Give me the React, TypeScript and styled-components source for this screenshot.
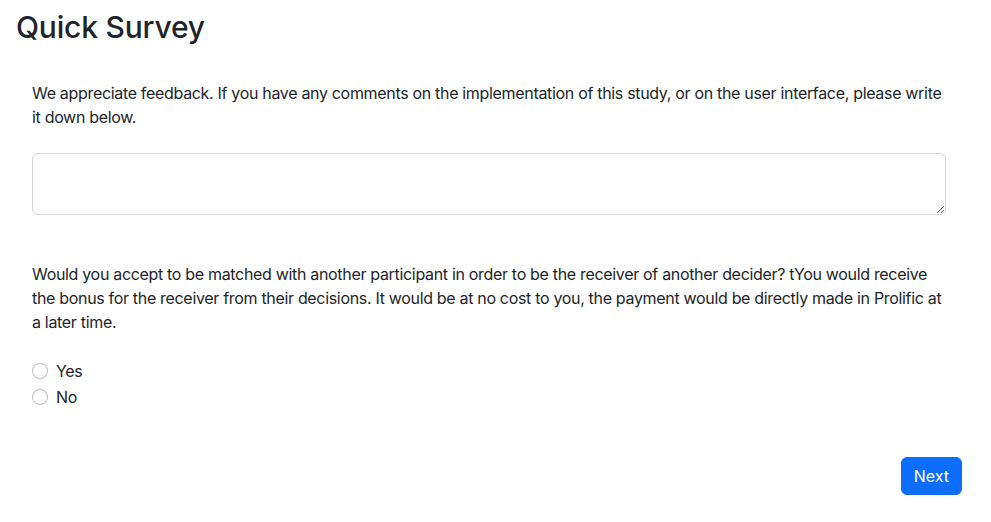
import React from "react";
import styled, { createGlobalStyle } from "styled-components";

const Global = createGlobalStyle`
  html, body { margin: 0; padding: 0; background: #fff; }
  body {
    font-family: Inter, "Liberation Sans", Arial, sans-serif;
    font-size: 16px;
    line-height: 1.5;
    color: #212529;
  }
  * { box-sizing: border-box; }
`;

const Page = styled.div`
  padding: 0 29px 0 16px;
`;

const Title = styled.h2`
  margin: 0;
  padding-top: 9px;
  font-size: 30px;
  font-weight: 500;
  line-height: 1.2;
  letter-spacing: -0.2px;
`;

const Body = styled.div`
  padding: 36px 16px 0 16px;
`;

const Field = styled.div<{ $gap: number }>`
  margin-bottom: ${(p) => p.$gap}px;
`;

const Label = styled.label`
  display: block;
  margin-bottom: 24px;
  letter-spacing: -0.32px;
`;

const TextArea = styled.textarea`
  display: block;
  width: 100%;
  height: 62px;
  padding: 6px 12px;
  font: inherit;
  color: #212529;
  border: 1px solid #d4d7db;
  border-radius: 6px;
  resize: vertical;
  outline: none;
`;

const Radios = styled.div`
  display: flex;
  flex-direction: column;
  padding-top: 1px;
`;

const RadioRow = styled.label`
  display: flex;
  align-items: center;
  gap: 8px;
  min-height: 24px;
  margin-bottom: 2px;
  letter-spacing: -0.32px;
`;

const Radio = styled.input.attrs({ type: "radio" })`
  appearance: none;
  margin: 0;
  width: 16px;
  height: 16px;
  border: 1px solid rgba(0, 0, 0, 0.25);
  border-radius: 50%;
  background: #fff;
`;

const Footer = styled.div`
  display: flex;
  justify-content: flex-end;
  padding-top: 46px;
`;

const Button = styled.button`
  height: 38px;
  padding: 0 12px;
  font: inherit;
  font-size: 16px;
  color: #fff;
  background: #0d6efd;
  border: 1px solid #0d6efd;
  border-radius: 6px;
`;

export default function App() {
  return (
    <>
      <Global />
      <Page>
        <Title>Quick Survey</Title>
        <Body>
          <Field $gap={47}>
            <Label>
              We appreciate feedback. If you have any comments on the implementation of this study, or on the user
              interface, please write it down below.
            </Label>
            <TextArea />
          </Field>
          <Field $gap={0}>
            <Label>
              Would you accept to be matched with another participant in order to be the receiver of another decider?
              tYou would receive the bonus for the receiver from their decisions. It would be at no cost to you, the
              payment would be directly made in Prolific at a later time.
            </Label>
            <Radios>
              <RadioRow>
                <Radio name="m" /> Yes
              </RadioRow>
              <RadioRow>
                <Radio name="m" /> No
              </RadioRow>
            </Radios>
          </Field>
        </Body>
        <Footer>
          <Button>Next</Button>
        </Footer>
      </Page>
    </>
  );
}
